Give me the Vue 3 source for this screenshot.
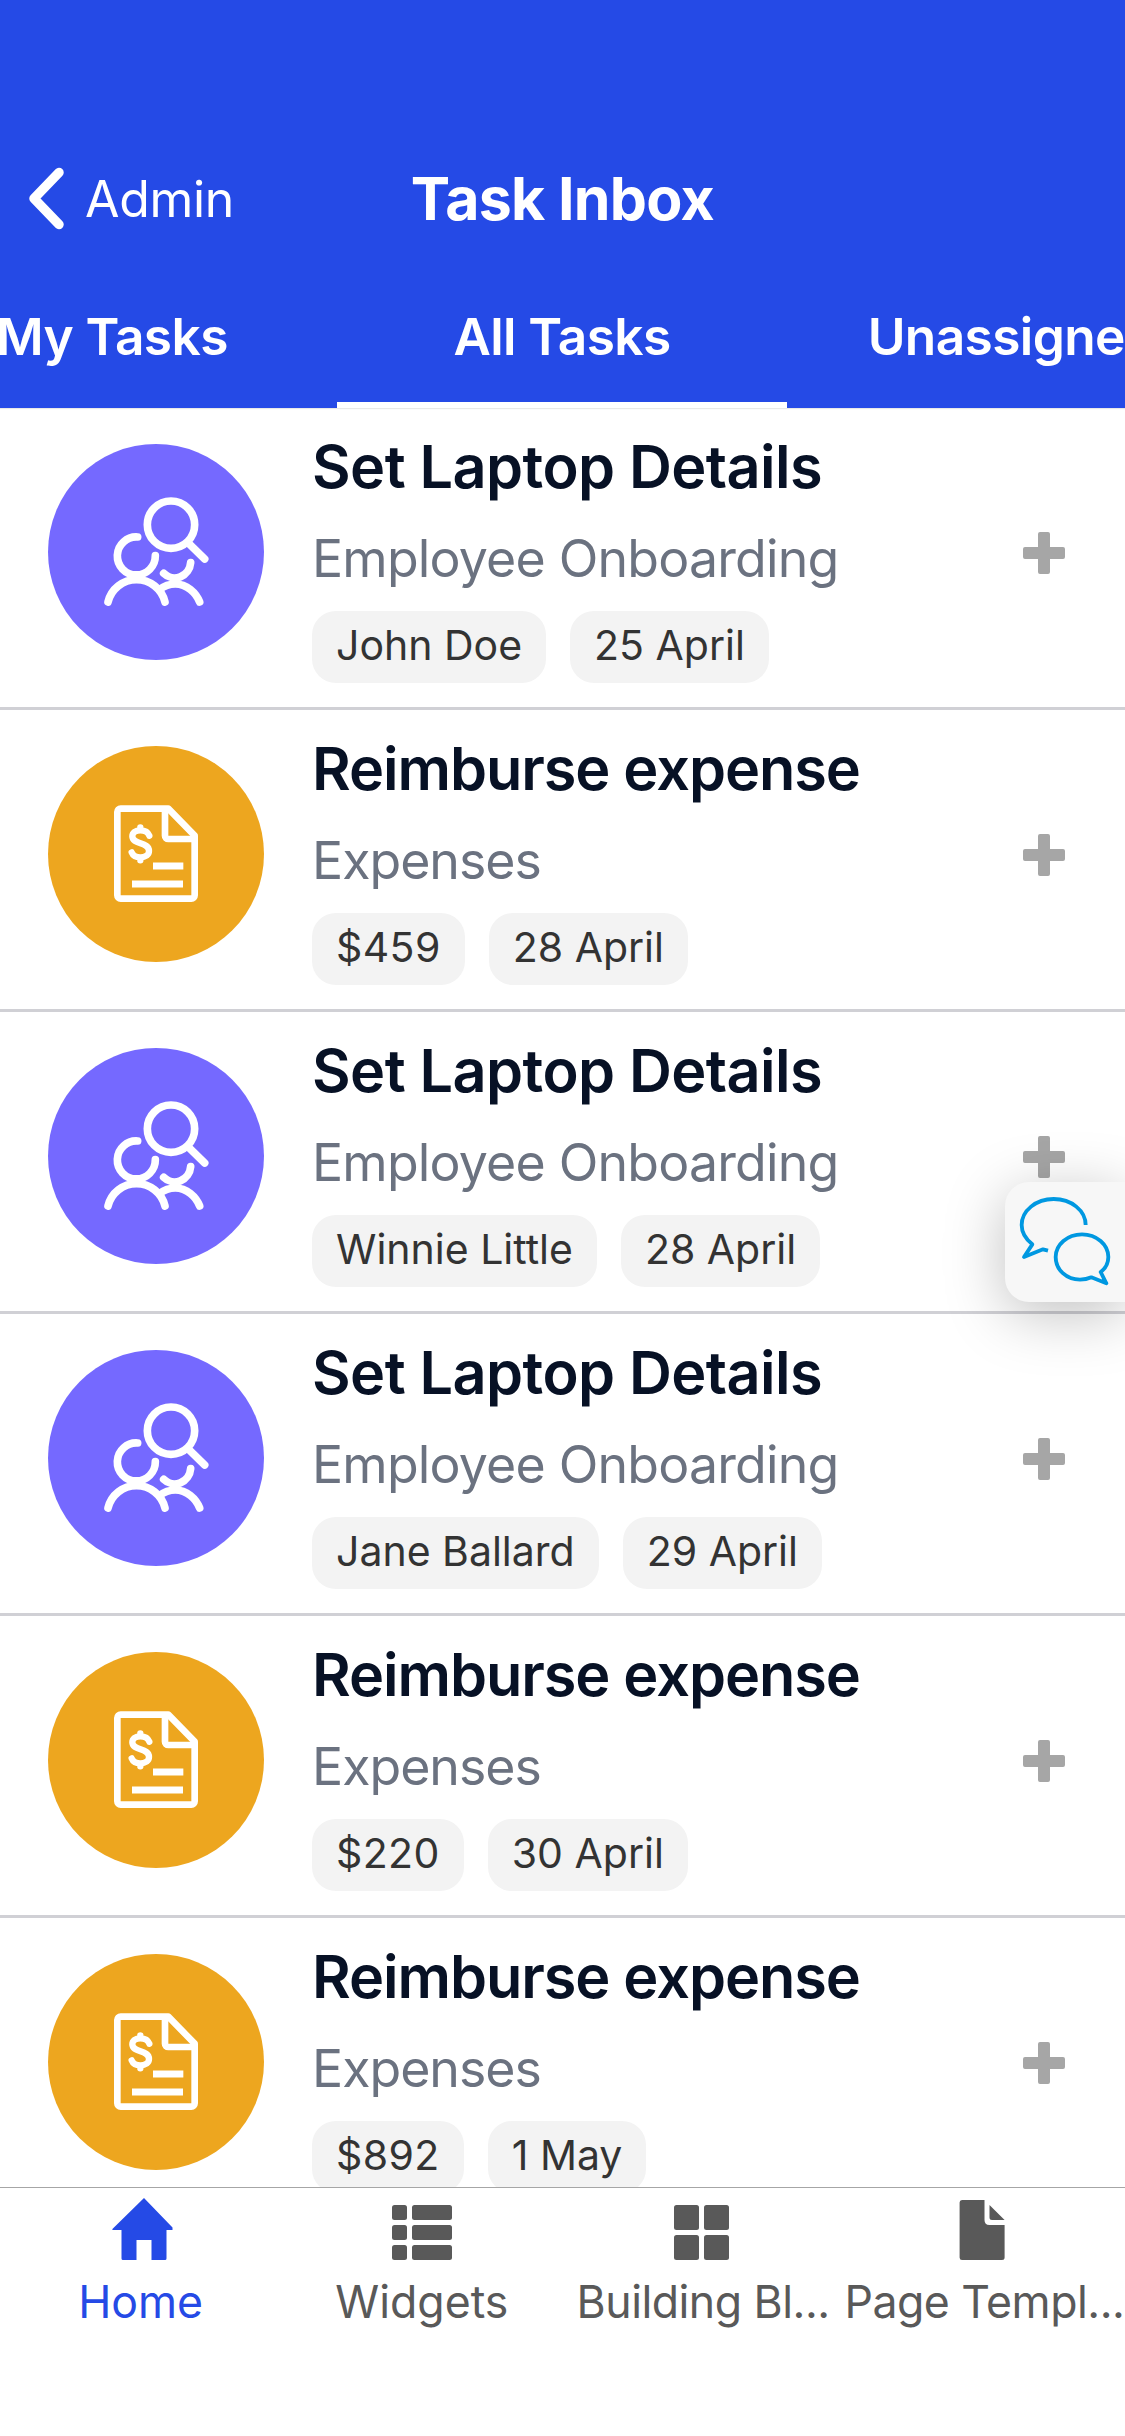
<script setup>
const tabs = [
  { label: 'My Tasks' },
  { label: 'All Tasks', active: true },
  { label: 'Unassigned' },
]
const laptop = { kind: 'people', title: 'Set Laptop Details', process: 'Employee Onboarding' }
const expense = { kind: 'expense', title: 'Reimburse expense', process: 'Expenses' }
const tasks = [
  { ...laptop, tags: ['John Doe', '25 April'] },
  { ...expense, tags: ['$459', '28 April'] },
  { ...laptop, tags: ['Winnie Little', '28 April'] },
  { ...laptop, tags: ['Jane Ballard', '29 April'] },
  { ...expense, tags: ['$220', '30 April'] },
  { ...expense, tags: ['$892', '1 May'] },
]
const nav = [
  { icon: 'home', label: 'Home', active: true },
  { icon: 'list', label: 'Widgets' },
  { icon: 'grid', label: 'Building Bl...', long: true },
  { icon: 'page', label: 'Page Templ...', long: true },
]
</script>

<template>
  <div class="screen">
    <header class="header">
      <div class="bar">
        <a class="back">
          <svg width="42" height="66" viewBox="0 0 42 66" fill="none" stroke="#fff" stroke-width="9.500" stroke-linecap="round" stroke-linejoin="round">
            <path d="M36 6.500 11 32.500 36 58.500" />
          </svg>
          <span>Admin</span>
        </a>
        <h1>Task Inbox</h1>
      </div>
      <div class="tabs">
        <div v-for="t in tabs" :key="t.label" class="tab" :class="{ active: t.active }">{{ t.label }}</div>
      </div>
    </header>

    <main class="list">
      <article v-for="(task, i) in tasks" :key="i" class="row" :class="task.kind">
        <div class="avatar">
          <svg v-if="task.kind === 'people'" width="130" height="130" viewBox="3 -9 390 390" class="line">
            <circle cx="243" cy="104" r="71" />
            <path d="M298 162 344 207" />
            <path d="M143 141A57 57 0 1 0 196 197" />
            <path d="M54 336A88 88 0 0 1 225 336" />
            <path d="M302 218A48 50 0 0 1 221 250" />
            <path d="M208 299Q230 282 256 282C290 282 318 308 329 336" />
          </svg>
          <svg v-else width="110" height="110" viewBox="3 12 330 330" class="line">
            <path class="join" d="M62 41H205L284 122V301A10 10 0 0 1 274 311H62A10 10 0 0 1 52 301V51A10 10 0 0 1 62 41Z" />
            <path class="join" d="M195 45V122A10 10 0 0 0 205 132H284" />
            <path class="butt" d="M159 213H250M96 267H249" />
            <path class="money" d="M148 122C144 111 134 106 121 106C106 106 97 114 97 124C97 150 147 140 147 168C147 179 137 187 121 187C108 187 99 182 95 172M121 97V106M121 187V196" />
          </svg>
        </div>
        <div class="body">
          <h2>{{ task.title }}</h2>
          <p>{{ task.process }}</p>
          <div class="tags">
            <span v-for="tag in task.tags" :key="tag" class="tag">{{ tag }}</span>
          </div>
        </div>
        <svg class="plus" width="42" height="42" viewBox="0 0 42 42" fill="#a6a6a6">
          <path d="M17 0H25Q27 0 27 2V15H40Q42 15 42 17V25Q42 27 40 27H27V40Q27 42 25 42H17Q15 42 15 40V27H2Q0 27 0 25V17Q0 15 2 15H15V2Q15 0 17 0Z" />
        </svg>
      </article>
    </main>

    <nav class="nav">
      <a v-for="n in nav" :key="n.icon" class="item" :class="{ active: n.active, long: n.long }">
        <svg width="60" height="62" viewBox="0 0 60 62" fill="currentColor">
          <path v-if="n.icon === 'home'" d="M33 0 61.5 29.500V32H55.500V60.500Q55.500 62 54 62H40.500V42H25.500V62H12Q10.500 62 10.500 60.500V32H1.400V31Z" />
          <template v-else-if="n.icon === 'list'">
            <template v-for="y in [7, 27, 47]" :key="y">
              <rect x="0" :y="y" width="15" height="15" rx="2.500" />
              <rect x="20" :y="y" width="40" height="15" rx="2.500" />
            </template>
          </template>
          <template v-else-if="n.icon === 'grid'">
            <rect x="1" y="7" width="25" height="25" rx="2.500" />
            <rect x="31" y="7" width="25" height="25" rx="2.500" />
            <rect x="1" y="37" width="25" height="25" rx="2.500" />
            <rect x="31" y="37" width="25" height="25" rx="2.500" />
          </template>
          <path v-else d="M8 2H30.500V22Q30.500 27 35.500 27H50.600V59.500Q50.600 62 48 62H8Q5.600 62 5.600 59.500V4.500Q5.600 2 8 2ZM35.500 7 50.600 22H38Q35.500 22 35.500 19.500Z" />
        </svg>
        <span>{{ n.label }}</span>
      </a>
    </nav>

    <button class="chat" aria-label="Chat">
      <svg width="120" height="120" viewBox="120 186 360 360" fill="none" stroke="#0098e1" stroke-width="11.500" stroke-linejoin="round">
        <path d="M362 315A96 78 0 0 0 170 315C170 338 182 357 202 373L177 411 234 388 249 392" />
        <path d="M272 411A79 68 0 0 1 430 411C430 429 423 444 407 456L424 490 379 472C368 477 358 479 345 479C305 479 272 450 272 411Z" />
      </svg>
    </button>
  </div>
</template>

<style>
body {
  margin: 0;
}
</style>

<style scoped>
.screen {
  position: relative;
  display: flex;
  flex-direction: column;
  width: 1125px;
  height: 2436px;
  overflow: hidden;
  background: #fff;
  font-family: Inter, 'Liberation Sans', sans-serif;
}
h1,
h2,
p {
  margin: 0;
}
svg {
  display: block;
  flex: none;
}
.header {
  flex: none;
  height: 408px;
  background: #254ae6;
  color: #fff;
  box-shadow: 0 1px 1px #e8e8e8;
  z-index: 1;
}
.bar {
  display: grid;
  grid-template-columns: 1fr auto 1fr;
  height: 132px;
  padding-top: 132px;
  line-height: 132px;
}
.back {
  display: flex;
  align-items: center;
  gap: 20px;
  padding-left: 23px;
  font-size: 50px;
}
.back span {
  padding-top: 1px;
  letter-spacing: -0.3px;
}
h1 {
  padding-top: 1px;
  font-size: 59px;
  font-weight: 700;
  letter-spacing: -0.7px;
}
.tabs {
  display: flex;
  justify-content: center;
  margin-right: 1px;
}
.tab {
  flex: none;
  box-sizing: border-box;
  width: 450px;
  height: 144px;
  line-height: 144px;
  text-align: center;
  font-size: 51.4px;
  font-weight: 600;
  letter-spacing: -0.6px;
}
.tab.active {
  border-bottom: 6px solid #fff;
}
.list {
  flex: 1;
  min-height: 0;
  overflow: hidden;
}
.row {
  display: flex;
  align-items: flex-start;
  box-sizing: border-box;
  height: 302px;
  padding: 0 60px 0 48px;
  border-bottom: 3px solid #d0d0d5;
}
.avatar {
  display: flex;
  align-items: center;
  justify-content: center;
  flex: none;
  width: 216px;
  height: 216px;
  margin-top: 36px;
  border-radius: 50%;
}
.people .avatar {
  background: #7569ff;
}
.expense .avatar {
  background: #eda61f;
}
.line {
  fill: none;
  stroke: #fff;
  stroke-width: 23;
  stroke-linecap: round;
}
.join {
  stroke-linejoin: round;
  stroke-width: 20;
}
.butt {
  stroke-width: 21;
  stroke-linecap: butt;
}
.money {
  stroke-width: 19;
}
.body {
  flex: 1;
  padding: 23px 0 0 48px;
}
h2 {
  color: #071125;
  font-size: 59.4px;
  line-height: 70px;
  font-weight: 600;
  letter-spacing: -0.55px;
}
.expense h2 {
  letter-spacing: -1.05px;
}
p {
  margin-top: 25px;
  color: #6b7280;
  font-size: 51.8px;
  line-height: 64px;
  letter-spacing: -0.8px;
}
.expense p {
  letter-spacing: -1px;
}
.tags {
  display: flex;
  gap: 24px;
  margin-top: 21px;
}
.tag {
  box-sizing: border-box;
  height: 72px;
  padding: 0 24px;
  border-radius: 24px;
  background: #f3f3f3;
  color: #333;
  font-size: 41px;
  line-height: 68px;
}
.expense .tag:first-child {
  letter-spacing: 0.4px;
}
.plus {
  margin-top: 124px;
}
.nav {
  display: flex;
  flex: none;
  box-sizing: border-box;
  height: 249px;
  border-top: 1px solid #a6a6a6;
  background: #fff;
}
.item {
  display: flex;
  flex-direction: column;
  align-items: center;
  flex: 1 1 0;
  min-width: 0;
  padding-top: 10px;
  color: #595959;
  font-size: 44.6px;
  line-height: 60px;
  white-space: nowrap;
}
.item svg {
  overflow: visible;
}
.item span {
  margin-top: 12px;
}
.item.active {
  color: #254ae6;
}
.long span {
  letter-spacing: -0.5px;
}
.chat {
  position: absolute;
  top: 1182px;
  right: 0;
  z-index: 2;
  width: 120px;
  height: 120px;
  padding: 0;
  border: 0;
  border-radius: 24px 0 0 24px;
  background: #f7f7f7;
  box-shadow: 0 12px 60px rgba(0, 0, 0, 0.25);
}
</style>
